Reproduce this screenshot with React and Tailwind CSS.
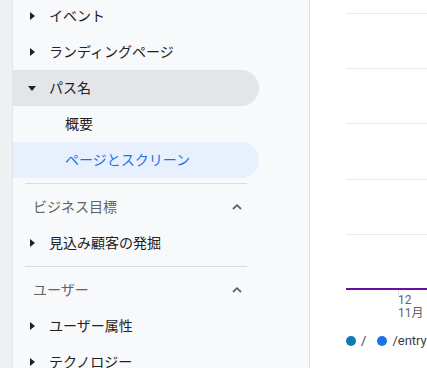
import React from "react";

const font = { fontFamily: '"Roboto", "Noto Sans CJK JP", sans-serif' };

function TriRight() {
  return (
    <svg width="5" height="8" viewBox="0 0 5 8" className="shrink-0">
      <path d="M0 0 L5 4 L0 8 Z" fill="#202124" />
    </svg>
  );
}
function TriDown() {
  return (
    <svg width="8" height="5" viewBox="0 0 8 5" className="shrink-0">
      <path d="M0 0 L8 0 L4 5 Z" fill="#202124" />
    </svg>
  );
}
function ChevUp() {
  return (
    <svg width="12" height="8" viewBox="0 0 12 8" className="shrink-0">
      <path d="M2 6 L6 2.2 L10 6" fill="none" stroke="#5f6368" strokeWidth="1.8" />
    </svg>
  );
}

function Item({ label, open = false, active = false }) {
  return (
    <div
      className={`flex h-[36px] items-center rounded-r-full mr-[50px] ${
        active ? "bg-[#e4e5e8]" : ""
      }`}
    >
      <div className="flex w-[36px] items-center justify-center pl-[2px]">
        {open ? <TriDown /> : <TriRight />}
      </div>
      <span className="text-[14px] text-[#202124]">{label}</span>
    </div>
  );
}

function Sub({ label, active = false }) {
  return (
    <div
      className={`flex h-[36px] items-center rounded-r-full mr-[50px] pl-[52px] text-[14px] ${
        active ? "bg-[#e8f0fe] text-[#1a73e8]" : "text-[#202124]"
      }`}
    >
      {label}
    </div>
  );
}

function Header({ label }) {
  return (
    <div className="flex h-[36px] items-center pl-[20px] pr-[66px] justify-between">
      <span className="text-[14px] text-[#5f6368]">{label}</span>
      <ChevUp />
    </div>
  );
}

function Divider() {
  return <div className="my-[5px] ml-[12px] mr-[62px] h-px bg-[#dadce0]" />;
}

function Grid({ mt }) {
  return <div className={`h-px bg-[#e8eaed] ${mt}`} />;
}

export default function App() {
  return (
    <div className="flex h-[368px] w-[427px] overflow-hidden bg-white" style={font}>
      <div className="w-[13px] shrink-0 bg-[#eef0f2] border-r border-[#e2e4e7]" />
      <div className="w-[297px] shrink-0 bg-[#f8f9fa] border-r border-[#dadce0]">
        <div className="-mt-[2px]">
          <Item label="イベント" />
          <Item label="ランディングページ" />
          <Item label="パス名" open active />
          <Sub label="概要" />
          <Sub label="ページとスクリーン" active />
          <Divider />
          <Header label="ビジネス目標" />
          <Item label="見込み顧客の発掘" />
          <Divider />
          <Header label="ユーザー" />
          <Item label="ユーザー属性" />
          <Item label="テクノロジー" />
        </div>
      </div>
      <div className="flex-1 pl-[36px] flex flex-col">
        <Grid mt="mt-[13px]" />
        <Grid mt="mt-[54px]" />
        <Grid mt="mt-[54px]" />
        <Grid mt="mt-[55px]" />
        <Grid mt="mt-[54px]" />
        <div className="mt-[53px] h-[2px] bg-[#6a0e9c]" />
        <div className="relative h-[41px]">
          <div className="absolute left-[52px] top-0 h-[6px] w-px bg-[#dadce0]" />
          <div className="absolute left-[52px] top-[4px] text-[12px] leading-[13px] text-[#5f6368]">
            <div>12</div>
            <div>11月</div>
          </div>
        </div>
        <div className="flex items-center text-[13px] text-[#3c4043]">
          <span className="h-[10px] w-[10px] shrink-0 rounded-full bg-[#0f78b5]" />
          <span className="ml-[5px]">/</span>
          <span className="ml-[11px] h-[10px] w-[10px] shrink-0 rounded-full bg-[#1a73e8]" />
          <span className="ml-[5px] whitespace-nowrap">/entry/</span>
        </div>
      </div>
    </div>
  );
}
